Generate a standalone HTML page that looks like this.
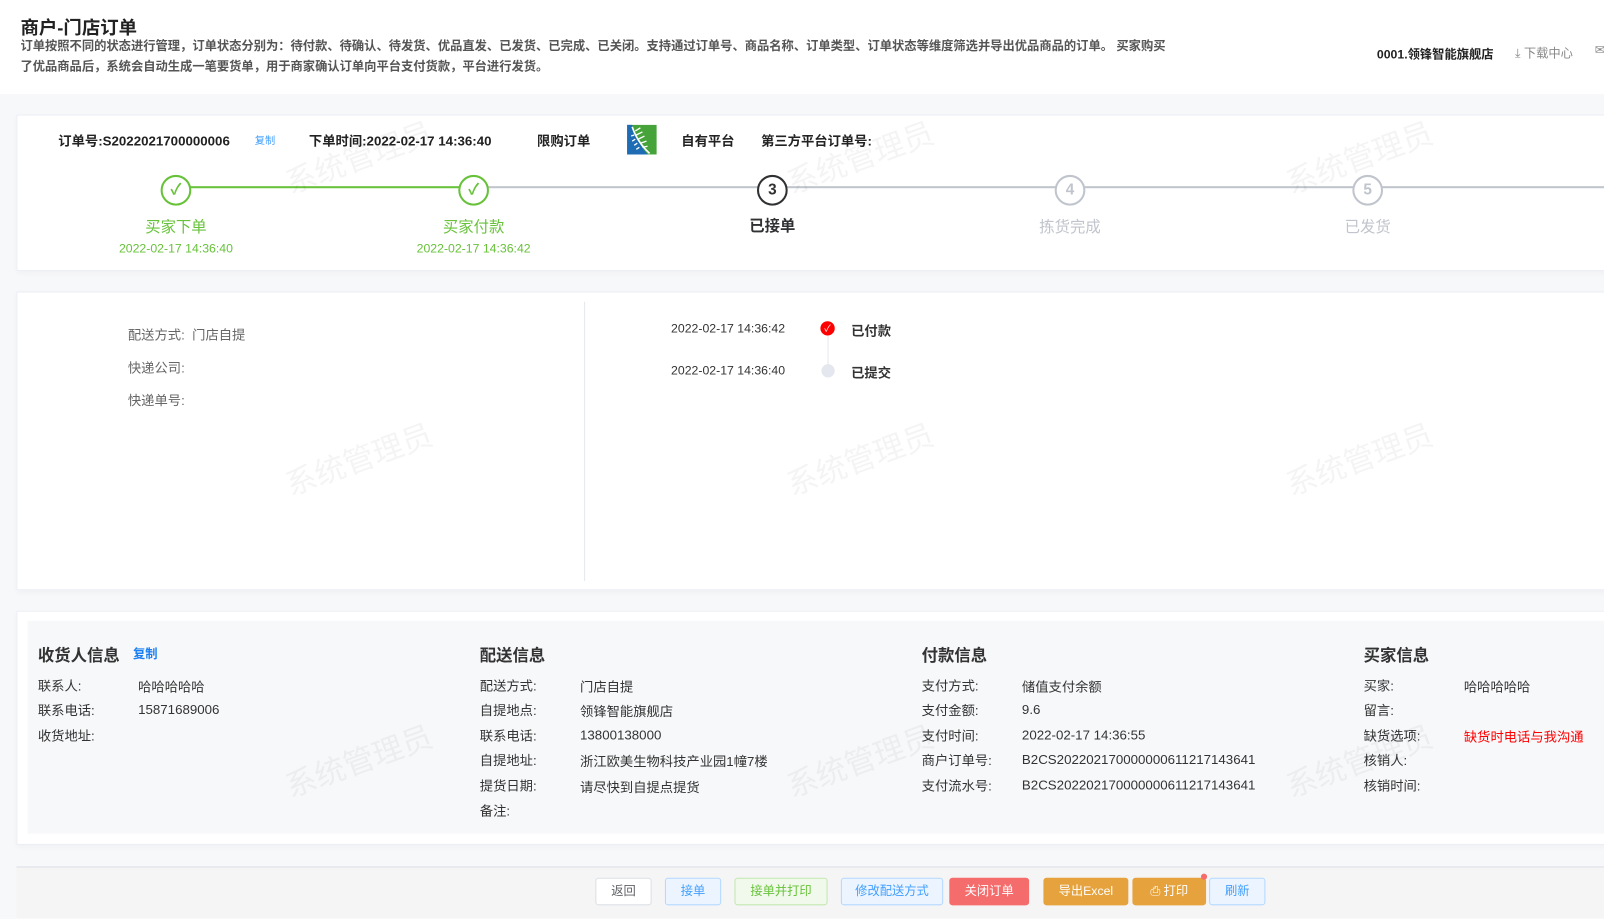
<!DOCTYPE html>
<html><head><meta charset="utf-8"><style>
*{margin:0;padding:0;box-sizing:border-box}
body{width:1604px;height:918px;overflow:hidden;background:#f7f8fa;font-family:"Liberation Sans","Noto Sans CJK SC",sans-serif;position:relative;color:#333}
#w{position:absolute;left:0;top:0;width:1568px;height:898px;transform:scale(1.02296);transform-origin:0 0}
.a{position:absolute;white-space:nowrap}
.hdr{position:absolute;left:0;top:0;width:1568px;height:92px;background:#fff}
.card{position:absolute;left:16px;width:1600px;background:#fff;border:1px solid #ebeef5;box-shadow:0 2px 6px rgba(0,0,0,.04)}
.b{font-weight:bold}
.c{position:absolute;width:30px;height:30px;border-radius:50%;border:2px solid #c0c4cc;background:#fff;text-align:center;line-height:26px;font-size:15px;font-weight:bold;color:#c0c4cc}
.g{border-color:#67c23a;color:#67c23a}
.lab{position:absolute;width:200px;text-align:center;font-size:15px}
.dt{position:absolute;width:200px;text-align:center;font-size:12px;color:#67c23a}
.wm{position:absolute;font-size:30px;color:rgba(0,0,0,.045);transform:rotate(-20deg);white-space:nowrap}
.k{position:absolute;font-size:13px;color:#333;white-space:nowrap}
.h{position:absolute;font-size:16px;font-weight:bold;color:#333}
.btn{position:absolute;top:858px;height:27px;border:1px solid;border-radius:3px;font-size:12px;text-align:center;line-height:25px}
</style></head><body><div id="w">
<div class="hdr"></div>
<div class="a b" style="left:20px;top:13px;font-size:18px;color:#222">商户-门店订单</div>
<div class="a" style="left:20px;top:35px;font-size:12px;color:#555;line-height:20px;font-weight:bold;white-space:normal;width:1122px">订单按照不同的状态进行管理，订单状态分别为：待付款、待确认、待发货、优品直发、已发货、已完成、已关闭。支持通过订单号、商品名称、订单类型、订单状态等维度筛选并导出优品商品的订单。 买家购买了优品商品后，系统会自动生成一笔要货单，用于商家确认订单向平台支付货款，平台进行发货。</div>
<div class="a b" style="left:1346px;top:44px;font-size:12px;color:#222">0001.领锋智能旗舰店</div>
<div class="a" style="left:1481px;top:43px;font-size:12px;color:#888">⤓ 下载中心</div>
<div class="a" style="left:1559px;top:42px;font-size:12px;color:#888">✉</div>

<div class="card" style="top:112px;height:153px"></div>
<div class="a b" style="left:57px;top:127px;font-size:13px;color:#222">订单号:S2022021700000006</div>
<div class="a" style="left:249px;top:129px;font-size:10px;color:#409eff">复制</div>
<div class="a b" style="left:302px;top:127px;font-size:13px;color:#222">下单时间:2022-02-17 14:36:40</div>
<div class="a b" style="left:525px;top:127px;font-size:13px;color:#222">限购订单</div>
<svg class="a" style="left:613px;top:122px" width="29" height="29" viewBox="0 0 29 29"><rect width="29" height="29" fill="#46a33a"/><path d="M0 0H5Q9 16 20 29H0Z" fill="#1e6db4"/><path d="M5 2Q10 17 22 28" stroke="#fff" stroke-width="1.6" fill="none"/><g stroke="#fff" stroke-width="1.3"><path d="M8 6l5-3M9 10l6-3M11 14l6-3M13 18l6-2M15 22l5-1M7 10l-3 1M8 14l-3 2M10 18l-3 2M12 22l-3 2"/></g></svg>
<div class="a b" style="left:666px;top:127px;font-size:13px;color:#222">自有平台</div>
<div class="a b" style="left:744px;top:127px;font-size:13px;color:#222">第三方平台订单号:</div>
<div class="a" style="left:172px;top:182px;width:291px;height:2px;background:#67c23a"></div>
<div class="a" style="left:463px;top:182px;width:1141px;height:2px;background:#c0c4cc"></div>
<div class="c g" style="left:157px;top:171px">✓</div>
<div class="c g" style="left:448px;top:171px">✓</div>
<div class="c" style="left:740px;top:171px;border-color:#303133;color:#303133">3</div>
<div class="c" style="left:1031px;top:171px">4</div>
<div class="c" style="left:1322px;top:171px">5</div>
<div class="lab" style="left:72px;top:211px;color:#67c23a">买家下单</div>
<div class="lab" style="left:363px;top:211px;color:#67c23a">买家付款</div>
<div class="lab" style="left:655px;top:210px;color:#303133;font-weight:bold">已接单</div>
<div class="lab" style="left:946px;top:211px;color:#c0c4cc">拣货完成</div>
<div class="lab" style="left:1237px;top:211px;color:#c0c4cc">已发货</div>
<div class="dt" style="left:72px;top:236px">2022-02-17 14:36:40</div>
<div class="dt" style="left:363px;top:236px">2022-02-17 14:36:42</div>

<div class="card" style="top:285px;height:292px"></div>
<div class="a" style="left:571px;top:295px;width:1px;height:273px;background:#e4e7ed"></div>
<div class="k" style="left:125px;top:317px;color:#666">配送方式: &nbsp;门店自提</div>
<div class="k" style="left:125px;top:349px;color:#666">快递公司:</div>
<div class="k" style="left:125px;top:381px;color:#666">快递单号:</div>
<div class="k" style="left:656px;top:314px;font-size:12px">2022-02-17 14:36:42</div>
<div class="k" style="left:656px;top:355px;font-size:12px">2022-02-17 14:36:40</div>
<div class="a" style="left:809px;top:328px;width:1px;height:30px;background:#e4e7ed"></div>
<div class="a" style="left:802px;top:314px;width:14px;height:14px;border-radius:50%;background:#f00;color:#fff;font-size:9px;text-align:center;line-height:14px">✓</div>
<div class="a" style="left:803px;top:356px;width:13px;height:13px;border-radius:50%;background:#e4e7ed"></div>
<div class="k b" style="left:832px;top:313px">已付款</div>
<div class="k b" style="left:832px;top:354px">已提交</div>

<div class="card" style="top:597px;height:229px"></div>
<div class="a" style="left:27px;top:607px;width:1577px;height:208px;background:#f7f8fa"></div>
<div class="h" style="left:37px;top:627px">收货人信息</div><div class="a b" style="left:130px;top:630px;font-size:12px;color:#1a7ff0">复制</div>
<div class="h" style="left:469px;top:627px">配送信息</div>
<div class="h" style="left:901px;top:627px">付款信息</div>
<div class="h" style="left:1333px;top:627px">买家信息</div>
<div class="k" style="left:37px;top:660px">联系人:</div><div class="k" style="left:135px;top:661px">哈哈哈哈哈</div>
<div class="k" style="left:37px;top:684px">联系电话:</div><div class="k" style="left:135px;top:686px">15871689006</div>
<div class="k" style="left:37px;top:709px">收货地址:</div>
<div class="k" style="left:469px;top:660px">配送方式:</div><div class="k" style="left:567px;top:661px">门店自提</div>
<div class="k" style="left:469px;top:684px">自提地点:</div><div class="k" style="left:567px;top:685px">领锋智能旗舰店</div>
<div class="k" style="left:469px;top:709px">联系电话:</div><div class="k" style="left:567px;top:711px">13800138000</div>
<div class="k" style="left:469px;top:733px">自提地址:</div><div class="k" style="left:567px;top:734px">浙江欧美生物科技产业园1幢7楼</div>
<div class="k" style="left:469px;top:758px">提货日期:</div><div class="k" style="left:567px;top:759px">请尽快到自提点提货</div>
<div class="k" style="left:469px;top:782px">备注:</div>
<div class="k" style="left:901px;top:660px">支付方式:</div><div class="k" style="left:999px;top:661px">储值支付余额</div>
<div class="k" style="left:901px;top:684px">支付金额:</div><div class="k" style="left:999px;top:686px">9.6</div>
<div class="k" style="left:901px;top:709px">支付时间:</div><div class="k" style="left:999px;top:711px">2022-02-17 14:36:55</div>
<div class="k" style="left:901px;top:733px">商户订单号:</div><div class="k" style="left:999px;top:735px">B2CS202202170000000611217143641</div>
<div class="k" style="left:901px;top:758px">支付流水号:</div><div class="k" style="left:999px;top:760px">B2CS202202170000000611217143641</div>
<div class="k" style="left:1333px;top:660px">买家:</div><div class="k" style="left:1431px;top:661px">哈哈哈哈哈</div>
<div class="k" style="left:1333px;top:684px">留言:</div>
<div class="k" style="left:1333px;top:709px">缺货选项:</div><div class="k" style="left:1431px;top:710px;color:#f00">缺货时电话与我沟通</div>
<div class="k" style="left:1333px;top:733px">核销人:</div>
<div class="k" style="left:1333px;top:758px">核销时间:</div>

<div class="a" style="left:16px;top:847px;width:1588px;height:50px;background:#f5f5f5;border-top:1px solid #dcdfe6"></div>
<div class="btn" style="left:582px;width:55px;background:#fff;border-color:#dcdfe6;color:#606266">返回</div>
<div class="btn" style="left:650px;width:55px;background:#ecf5ff;border-color:#b3d8ff;color:#409eff">接单</div>
<div class="btn" style="left:718px;width:91px;background:#f0f9eb;border-color:#c2e7b0;color:#67c23a">接单并打印</div>
<div class="btn" style="left:822px;width:100px;background:#ecf5ff;border-color:#b3d8ff;color:#409eff">修改配送方式</div>
<div class="btn" style="left:928px;width:78px;background:#f56c6c;border-color:#f56c6c;color:#fff">关闭订单</div>
<div class="btn" style="left:1020px;width:83px;background:#e6a23c;border-color:#e6a23c;color:#fff">导出Excel</div>
<div class="btn" style="left:1107px;width:72px;background:#e6a23c;border-color:#e6a23c;color:#fff">⎙ 打印</div>
<div class="a" style="left:1174px;top:854px;width:6px;height:6px;border-radius:50%;background:#f56c6c"></div>
<div class="btn" style="left:1182px;width:55px;background:#ecf5ff;border-color:#b3d8ff;color:#409eff">刷新</div>

<div class="wm" style="left:275px;top:130px">系统管理员</div>
<div class="wm" style="left:765px;top:130px">系统管理员</div>
<div class="wm" style="left:1253px;top:130px">系统管理员</div>
<div class="wm" style="left:275px;top:425px">系统管理员</div>
<div class="wm" style="left:765px;top:425px">系统管理员</div>
<div class="wm" style="left:1253px;top:425px">系统管理员</div>
<div class="wm" style="left:275px;top:720px">系统管理员</div>
<div class="wm" style="left:765px;top:720px">系统管理员</div>
<div class="wm" style="left:1253px;top:720px">系统管理员</div>
</div></body></html>
